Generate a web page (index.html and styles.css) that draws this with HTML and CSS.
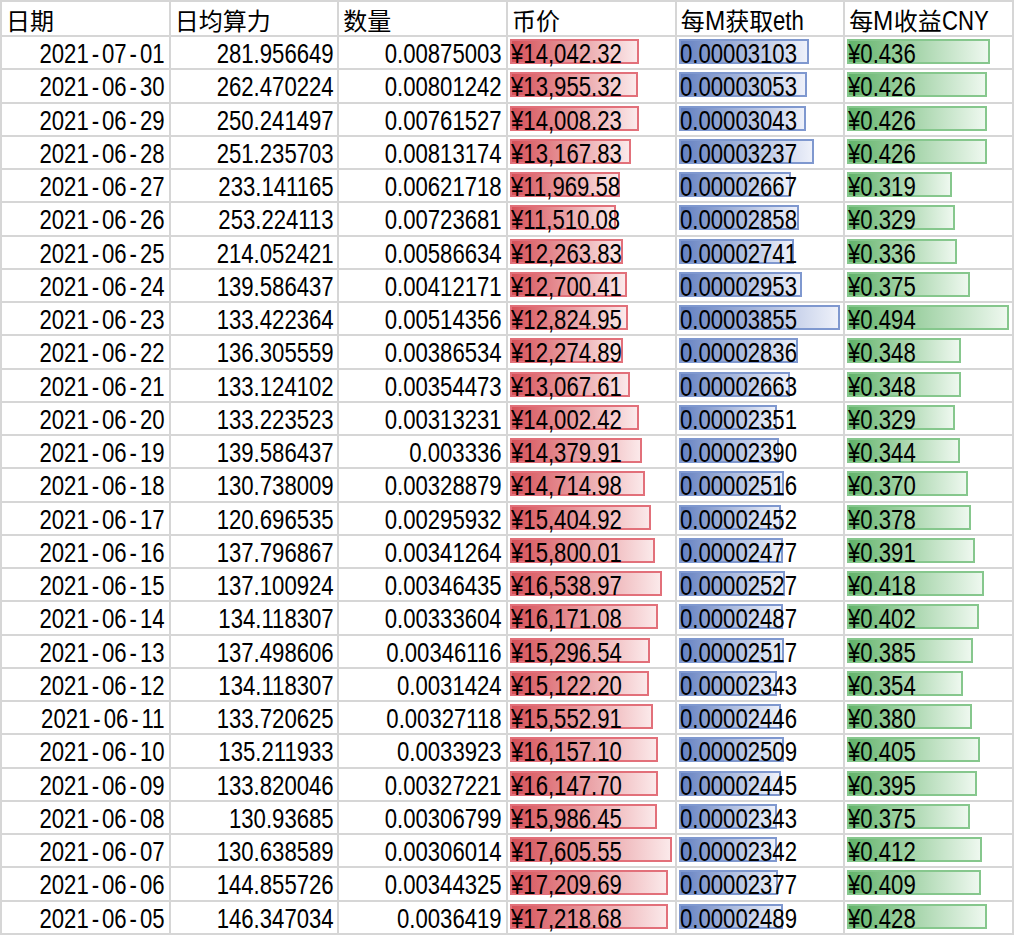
FILE: index.html
```html
<!DOCTYPE html>
<html lang="zh-CN">
<head>
<meta charset="utf-8">
<title>ETH 收益</title>
<link rel="stylesheet" href="styles.css">
</head>
<body>
<div class="sheet">
  <div class="row head">
    <div class="cell"><span class="cjk">日期</span></div>
    <div class="cell"><span class="cjk">日均算力</span></div>
    <div class="cell"><span class="cjk">数量</span></div>
    <div class="cell"><span class="cjk">币价</span></div>
    <div class="cell"><span class="cjk">每</span><span class="lat m">M</span><span class="cjk">获取</span><span class="lat">eth</span></div>
    <div class="cell"><span class="cjk">每</span><span class="lat m">M</span><span class="cjk">收益</span><span class="lat">CNY</span></div>
  </div>

  <div class="row"><div class="cell num"><span class="t">2021<span class="dash">-</span>07<span class="dash">-</span>01</span></div><div class="cell num"><span class="t">281.956649</span></div><div class="cell num"><span class="t">0.00875003</span></div><div class="cell bc red"><div class="track"><div class="bar" style="width:79.76%"></div></div><span class="t">¥14,042.32</span></div><div class="cell bc blue"><div class="track"><div class="bar" style="width:80.49%"></div></div><span class="t">0.00003103</span></div><div class="cell bc green"><div class="track"><div class="bar" style="width:88.26%"></div></div><span class="t">¥0.436</span></div></div>
  <div class="row"><div class="cell num"><span class="t">2021<span class="dash">-</span>06<span class="dash">-</span>30</span></div><div class="cell num"><span class="t">262.470224</span></div><div class="cell num"><span class="t">0.00801242</span></div><div class="cell bc red"><div class="track"><div class="bar" style="width:79.27%"></div></div><span class="t">¥13,955.32</span></div><div class="cell bc blue"><div class="track"><div class="bar" style="width:79.20%"></div></div><span class="t">0.00003053</span></div><div class="cell bc green"><div class="track"><div class="bar" style="width:86.23%"></div></div><span class="t">¥0.426</span></div></div>
  <div class="row"><div class="cell num"><span class="t">2021<span class="dash">-</span>06<span class="dash">-</span>29</span></div><div class="cell num"><span class="t">250.241497</span></div><div class="cell num"><span class="t">0.00761527</span></div><div class="cell bc red"><div class="track"><div class="bar" style="width:79.57%"></div></div><span class="t">¥14,008.23</span></div><div class="cell bc blue"><div class="track"><div class="bar" style="width:78.94%"></div></div><span class="t">0.00003043</span></div><div class="cell bc green"><div class="track"><div class="bar" style="width:86.23%"></div></div><span class="t">¥0.426</span></div></div>
  <div class="row"><div class="cell num"><span class="t">2021<span class="dash">-</span>06<span class="dash">-</span>28</span></div><div class="cell num"><span class="t">251.235703</span></div><div class="cell num"><span class="t">0.00813174</span></div><div class="cell bc red"><div class="track"><div class="bar" style="width:74.79%"></div></div><span class="t">¥13,167.83</span></div><div class="cell bc blue"><div class="track"><div class="bar" style="width:83.97%"></div></div><span class="t">0.00003237</span></div><div class="cell bc green"><div class="track"><div class="bar" style="width:86.23%"></div></div><span class="t">¥0.426</span></div></div>
  <div class="row"><div class="cell num"><span class="t">2021<span class="dash">-</span>06<span class="dash">-</span>27</span></div><div class="cell num"><span class="t">233.141165</span></div><div class="cell num"><span class="t">0.00621718</span></div><div class="cell bc red"><div class="track"><div class="bar" style="width:67.99%"></div></div><span class="t">¥11,969.58</span></div><div class="cell bc blue"><div class="track"><div class="bar" style="width:69.18%"></div></div><span class="t">0.00002667</span></div><div class="cell bc green"><div class="track"><div class="bar" style="width:64.57%"></div></div><span class="t">¥0.319</span></div></div>
  <div class="row"><div class="cell num"><span class="t">2021<span class="dash">-</span>06<span class="dash">-</span>26</span></div><div class="cell num"><span class="t">253.224113</span></div><div class="cell num"><span class="t">0.00723681</span></div><div class="cell bc red"><div class="track"><div class="bar" style="width:65.38%"></div></div><span class="t">¥11,510.08</span></div><div class="cell bc blue"><div class="track"><div class="bar" style="width:74.14%"></div></div><span class="t">0.00002858</span></div><div class="cell bc green"><div class="track"><div class="bar" style="width:66.60%"></div></div><span class="t">¥0.329</span></div></div>
  <div class="row"><div class="cell num"><span class="t">2021<span class="dash">-</span>06<span class="dash">-</span>25</span></div><div class="cell num"><span class="t">214.052421</span></div><div class="cell num"><span class="t">0.00586634</span></div><div class="cell bc red"><div class="track"><div class="bar" style="width:69.66%"></div></div><span class="t">¥12,263.83</span></div><div class="cell bc blue"><div class="track"><div class="bar" style="width:71.10%"></div></div><span class="t">0.00002741</span></div><div class="cell bc green"><div class="track"><div class="bar" style="width:68.02%"></div></div><span class="t">¥0.336</span></div></div>
  <div class="row"><div class="cell num"><span class="t">2021<span class="dash">-</span>06<span class="dash">-</span>24</span></div><div class="cell num"><span class="t">139.586437</span></div><div class="cell num"><span class="t">0.00412171</span></div><div class="cell bc red"><div class="track"><div class="bar" style="width:72.14%"></div></div><span class="t">¥12,700.41</span></div><div class="cell bc blue"><div class="track"><div class="bar" style="width:76.60%"></div></div><span class="t">0.00002953</span></div><div class="cell bc green"><div class="track"><div class="bar" style="width:75.91%"></div></div><span class="t">¥0.375</span></div></div>
  <div class="row"><div class="cell num"><span class="t">2021<span class="dash">-</span>06<span class="dash">-</span>23</span></div><div class="cell num"><span class="t">133.422364</span></div><div class="cell num"><span class="t">0.00514356</span></div><div class="cell bc red"><div class="track"><div class="bar" style="width:72.85%"></div></div><span class="t">¥12,824.95</span></div><div class="cell bc blue"><div class="track"><div class="bar" style="width:100%"></div></div><span class="t">0.00003855</span></div><div class="cell bc green"><div class="track"><div class="bar" style="width:100%"></div></div><span class="t">¥0.494</span></div></div>
  <div class="row"><div class="cell num"><span class="t">2021<span class="dash">-</span>06<span class="dash">-</span>22</span></div><div class="cell num"><span class="t">136.305559</span></div><div class="cell num"><span class="t">0.00386534</span></div><div class="cell bc red"><div class="track"><div class="bar" style="width:69.72%"></div></div><span class="t">¥12,274.89</span></div><div class="cell bc blue"><div class="track"><div class="bar" style="width:73.57%"></div></div><span class="t">0.00002836</span></div><div class="cell bc green"><div class="track"><div class="bar" style="width:70.45%"></div></div><span class="t">¥0.348</span></div></div>
  <div class="row"><div class="cell num"><span class="t">2021<span class="dash">-</span>06<span class="dash">-</span>21</span></div><div class="cell num"><span class="t">133.124102</span></div><div class="cell num"><span class="t">0.00354473</span></div><div class="cell bc red"><div class="track"><div class="bar" style="width:74.22%"></div></div><span class="t">¥13,067.61</span></div><div class="cell bc blue"><div class="track"><div class="bar" style="width:69.08%"></div></div><span class="t">0.00002663</span></div><div class="cell bc green"><div class="track"><div class="bar" style="width:70.45%"></div></div><span class="t">¥0.348</span></div></div>
  <div class="row"><div class="cell num"><span class="t">2021<span class="dash">-</span>06<span class="dash">-</span>20</span></div><div class="cell num"><span class="t">133.223523</span></div><div class="cell num"><span class="t">0.00313231</span></div><div class="cell bc red"><div class="track"><div class="bar" style="width:79.53%"></div></div><span class="t">¥14,002.42</span></div><div class="cell bc blue"><div class="track"><div class="bar" style="width:60.99%"></div></div><span class="t">0.00002351</span></div><div class="cell bc green"><div class="track"><div class="bar" style="width:66.60%"></div></div><span class="t">¥0.329</span></div></div>
  <div class="row"><div class="cell num"><span class="t">2021<span class="dash">-</span>06<span class="dash">-</span>19</span></div><div class="cell num"><span class="t">139.586437</span></div><div class="cell num"><span class="t">0.003336</span></div><div class="cell bc red"><div class="track"><div class="bar" style="width:81.68%"></div></div><span class="t">¥14,379.91</span></div><div class="cell bc blue"><div class="track"><div class="bar" style="width:62.00%"></div></div><span class="t">0.00002390</span></div><div class="cell bc green"><div class="track"><div class="bar" style="width:69.64%"></div></div><span class="t">¥0.344</span></div></div>
  <div class="row"><div class="cell num"><span class="t">2021<span class="dash">-</span>06<span class="dash">-</span>18</span></div><div class="cell num"><span class="t">130.738009</span></div><div class="cell num"><span class="t">0.00328879</span></div><div class="cell bc red"><div class="track"><div class="bar" style="width:83.58%"></div></div><span class="t">¥14,714.98</span></div><div class="cell bc blue"><div class="track"><div class="bar" style="width:65.27%"></div></div><span class="t">0.00002516</span></div><div class="cell bc green"><div class="track"><div class="bar" style="width:74.90%"></div></div><span class="t">¥0.370</span></div></div>
  <div class="row"><div class="cell num"><span class="t">2021<span class="dash">-</span>06<span class="dash">-</span>17</span></div><div class="cell num"><span class="t">120.696535</span></div><div class="cell num"><span class="t">0.00295932</span></div><div class="cell bc red"><div class="track"><div class="bar" style="width:87.50%"></div></div><span class="t">¥15,404.92</span></div><div class="cell bc blue"><div class="track"><div class="bar" style="width:63.61%"></div></div><span class="t">0.00002452</span></div><div class="cell bc green"><div class="track"><div class="bar" style="width:76.52%"></div></div><span class="t">¥0.378</span></div></div>
  <div class="row"><div class="cell num"><span class="t">2021<span class="dash">-</span>06<span class="dash">-</span>16</span></div><div class="cell num"><span class="t">137.796867</span></div><div class="cell num"><span class="t">0.00341264</span></div><div class="cell bc red"><div class="track"><div class="bar" style="width:89.74%"></div></div><span class="t">¥15,800.01</span></div><div class="cell bc blue"><div class="track"><div class="bar" style="width:64.25%"></div></div><span class="t">0.00002477</span></div><div class="cell bc green"><div class="track"><div class="bar" style="width:79.15%"></div></div><span class="t">¥0.391</span></div></div>
  <div class="row"><div class="cell num"><span class="t">2021<span class="dash">-</span>06<span class="dash">-</span>15</span></div><div class="cell num"><span class="t">137.100924</span></div><div class="cell num"><span class="t">0.00346435</span></div><div class="cell bc red"><div class="track"><div class="bar" style="width:93.94%"></div></div><span class="t">¥16,538.97</span></div><div class="cell bc blue"><div class="track"><div class="bar" style="width:65.55%"></div></div><span class="t">0.00002527</span></div><div class="cell bc green"><div class="track"><div class="bar" style="width:84.62%"></div></div><span class="t">¥0.418</span></div></div>
  <div class="row"><div class="cell num"><span class="t">2021<span class="dash">-</span>06<span class="dash">-</span>14</span></div><div class="cell num"><span class="t">134.118307</span></div><div class="cell num"><span class="t">0.00333604</span></div><div class="cell bc red"><div class="track"><div class="bar" style="width:91.85%"></div></div><span class="t">¥16,171.08</span></div><div class="cell bc blue"><div class="track"><div class="bar" style="width:64.51%"></div></div><span class="t">0.00002487</span></div><div class="cell bc green"><div class="track"><div class="bar" style="width:81.38%"></div></div><span class="t">¥0.402</span></div></div>
  <div class="row"><div class="cell num"><span class="t">2021<span class="dash">-</span>06<span class="dash">-</span>13</span></div><div class="cell num"><span class="t">137.498606</span></div><div class="cell num"><span class="t">0.00346116</span></div><div class="cell bc red"><div class="track"><div class="bar" style="width:86.88%"></div></div><span class="t">¥15,296.54</span></div><div class="cell bc blue"><div class="track"><div class="bar" style="width:65.29%"></div></div><span class="t">0.00002517</span></div><div class="cell bc green"><div class="track"><div class="bar" style="width:77.94%"></div></div><span class="t">¥0.385</span></div></div>
  <div class="row"><div class="cell num"><span class="t">2021<span class="dash">-</span>06<span class="dash">-</span>12</span></div><div class="cell num"><span class="t">134.118307</span></div><div class="cell num"><span class="t">0.0031424</span></div><div class="cell bc red"><div class="track"><div class="bar" style="width:85.89%"></div></div><span class="t">¥15,122.20</span></div><div class="cell bc blue"><div class="track"><div class="bar" style="width:60.78%"></div></div><span class="t">0.00002343</span></div><div class="cell bc green"><div class="track"><div class="bar" style="width:71.66%"></div></div><span class="t">¥0.354</span></div></div>
  <div class="row"><div class="cell num"><span class="t">2021<span class="dash">-</span>06<span class="dash">-</span>11</span></div><div class="cell num"><span class="t">133.720625</span></div><div class="cell num"><span class="t">0.00327118</span></div><div class="cell bc red"><div class="track"><div class="bar" style="width:88.34%"></div></div><span class="t">¥15,552.91</span></div><div class="cell bc blue"><div class="track"><div class="bar" style="width:63.45%"></div></div><span class="t">0.00002446</span></div><div class="cell bc green"><div class="track"><div class="bar" style="width:76.92%"></div></div><span class="t">¥0.380</span></div></div>
  <div class="row"><div class="cell num"><span class="t">2021<span class="dash">-</span>06<span class="dash">-</span>10</span></div><div class="cell num"><span class="t">135.211933</span></div><div class="cell num"><span class="t">0.0033923</span></div><div class="cell bc red"><div class="track"><div class="bar" style="width:91.77%"></div></div><span class="t">¥16,157.10</span></div><div class="cell bc blue"><div class="track"><div class="bar" style="width:65.08%"></div></div><span class="t">0.00002509</span></div><div class="cell bc green"><div class="track"><div class="bar" style="width:81.98%"></div></div><span class="t">¥0.405</span></div></div>
  <div class="row"><div class="cell num"><span class="t">2021<span class="dash">-</span>06<span class="dash">-</span>09</span></div><div class="cell num"><span class="t">133.820046</span></div><div class="cell num"><span class="t">0.00327221</span></div><div class="cell bc red"><div class="track"><div class="bar" style="width:91.72%"></div></div><span class="t">¥16,147.70</span></div><div class="cell bc blue"><div class="track"><div class="bar" style="width:63.42%"></div></div><span class="t">0.00002445</span></div><div class="cell bc green"><div class="track"><div class="bar" style="width:79.96%"></div></div><span class="t">¥0.395</span></div></div>
  <div class="row"><div class="cell num"><span class="t">2021<span class="dash">-</span>06<span class="dash">-</span>08</span></div><div class="cell num"><span class="t">130.93685</span></div><div class="cell num"><span class="t">0.00306799</span></div><div class="cell bc red"><div class="track"><div class="bar" style="width:90.80%"></div></div><span class="t">¥15,986.45</span></div><div class="cell bc blue"><div class="track"><div class="bar" style="width:60.78%"></div></div><span class="t">0.00002343</span></div><div class="cell bc green"><div class="track"><div class="bar" style="width:75.91%"></div></div><span class="t">¥0.375</span></div></div>
  <div class="row"><div class="cell num"><span class="t">2021<span class="dash">-</span>06<span class="dash">-</span>07</span></div><div class="cell num"><span class="t">130.638589</span></div><div class="cell num"><span class="t">0.00306014</span></div><div class="cell bc red"><div class="track"><div class="bar" style="width:100%"></div></div><span class="t">¥17,605.55</span></div><div class="cell bc blue"><div class="track"><div class="bar" style="width:60.75%"></div></div><span class="t">0.00002342</span></div><div class="cell bc green"><div class="track"><div class="bar" style="width:83.40%"></div></div><span class="t">¥0.412</span></div></div>
  <div class="row"><div class="cell num"><span class="t">2021<span class="dash">-</span>06<span class="dash">-</span>06</span></div><div class="cell num"><span class="t">144.855726</span></div><div class="cell num"><span class="t">0.00344325</span></div><div class="cell bc red"><div class="track"><div class="bar" style="width:97.75%"></div></div><span class="t">¥17,209.69</span></div><div class="cell bc blue"><div class="track"><div class="bar" style="width:61.66%"></div></div><span class="t">0.00002377</span></div><div class="cell bc green"><div class="track"><div class="bar" style="width:82.79%"></div></div><span class="t">¥0.409</span></div></div>
  <div class="row"><div class="cell num"><span class="t">2021<span class="dash">-</span>06<span class="dash">-</span>05</span></div><div class="cell num"><span class="t">146.347034</span></div><div class="cell num"><span class="t">0.0036419</span></div><div class="cell bc red"><div class="track"><div class="bar" style="width:97.80%"></div></div><span class="t">¥17,218.68</span></div><div class="cell bc blue"><div class="track"><div class="bar" style="width:64.57%"></div></div><span class="t">0.00002489</span></div><div class="cell bc green"><div class="track"><div class="bar" style="width:86.64%"></div></div><span class="t">¥0.428</span></div></div>
</div>
</body>
</html>
```

FILE: styles.css
```css
html, body {
  margin: 0;
  padding: 0;
  background: #ffffff;
}

.sheet {
  display: grid;
  grid-template-columns: repeat(6, 1fr);
  grid-template-rows: repeat(28, 1fr);
  gap: 2px;
  padding: 2px;
  width: 1014px;
  height: 935px;
  box-sizing: border-box;
  background: #d6d6d6;
}

.row {
  display: contents;
}

.cell {
  position: relative;
  white-space: nowrap;
  background: #ffffff;
  color: #000000;
  font-family: "Liberation Sans", "Noto Sans CJK SC", sans-serif;
  font-size: 27px;
  line-height: 27px;
  padding: 4px 4px 0 4px;
  box-sizing: border-box;
}

.head .cell {
  padding-left: 4px;
}

.cjk {
  font-family: "Noto Sans CJK SC", sans-serif;
  font-size: 24px;
}

.lat {
  display: inline-block;
  transform: scaleX(0.82);
  transform-origin: left center;
}

.lat.m {
  margin-right: -2px;
  transform: scaleX(0.9);
}

.t {
  position: relative;
  display: inline-block;
  transform: scaleX(0.82);
  transform-origin: left center;
}

.num {
  text-align: right;
}

.num .t {
  transform-origin: right center;
}

.dash {
  margin: 0 3.6px;
}

.bc {
  padding-left: 3px;
}

.track {
  position: absolute;
  left: 2px;
  right: 3px;
  top: 2px;
  height: 25px;
}

.bar {
  height: 100%;
  box-sizing: border-box;
  border: 2px solid;
}

.red .bar {
  border-color: #e2707a;
  background: linear-gradient(to right, #d65058, #fbe9ea);
}

.blue .bar {
  border-color: #7f98cf;
  background: linear-gradient(to right, #6581c1, #eef1fa);
}

.green .bar {
  border-color: #86c78d;
  background: linear-gradient(to right, #62b36a, #eef8ef);
}
```
